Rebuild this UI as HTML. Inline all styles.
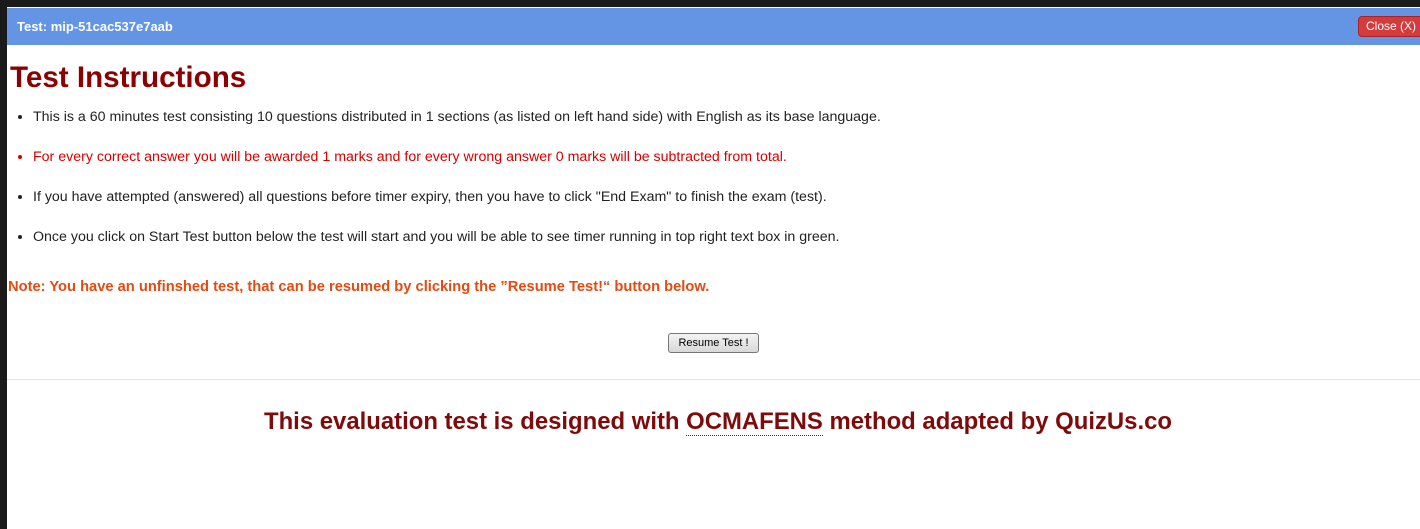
<!DOCTYPE html>
<html><head><style>
html,body{margin:0;padding:0;width:1420px;height:529px;overflow:hidden;background:#1a1a1a;font-family:"Liberation Sans",Arial,sans-serif}
#win{position:absolute;left:7px;top:7px;width:1413px;height:522px;background:#fff}
#bar{position:absolute;left:0;top:1px;width:1413px;height:37px;background:#6495e4}
#bar .t{position:absolute;left:10px;top:11px;color:#fff;font-size:13px;font-weight:bold}
#close{position:absolute;left:1351px;top:8px;width:64px;height:19px;background:#d23c3c;border:1px solid #a82424;border-radius:4px;color:#fff;font-size:12px;line-height:19px;text-align:center}
h1{position:absolute;left:3px;top:54px;margin:0;color:#8b0000;font-size:29.6px;font-weight:bold}
ul{position:absolute;left:0;top:102px;margin:0;padding:0 0 0 26px;font-size:14.2px;color:#222}
li{height:40px;line-height:16px}
li.r{color:#d40000}
.note{position:absolute;left:1px;top:272px;color:#e04c12;font-size:14.7px;font-weight:bold}
.btn{position:absolute;left:661px;top:326px;width:89px;height:18px;border:1px solid #777;border-radius:3px;background:linear-gradient(#f4f4f4,#d8d8d8);font-size:11px;line-height:18px;text-align:center;color:#000}
hr{position:absolute;left:0;top:372px;width:1413px;margin:0;border:0;border-top:1px solid #e5e5e5}
.foot{position:absolute;left:257px;top:401px;color:#7f0a0a;font-size:23.9px;font-weight:bold;white-space:nowrap}
.foot u{text-decoration:none;border-bottom:1px dotted #333}
</style></head><body>
<div id="win">
<div id="bar"><span class="t">Test: mip-51cac537e7aab</span><div id="close">Close (X)</div></div>
<h1>Test Instructions</h1>
<ul>
<li>This is a 60 minutes test consisting 10 questions distributed in 1 sections (as listed on left hand side) with English as its base language.</li>
<li class="r">For every correct answer you will be awarded 1 marks and for every wrong answer 0 marks will be subtracted from total.</li>
<li>If you have attempted (answered) all questions before timer expiry, then you have to click "End Exam" to finish the exam (test).</li>
<li>Once you click on Start Test button below the test will start and you will be able to see timer running in top right text box in green.</li>
</ul>
<div class="note">Note: You have an unfinshed test, that can be resumed by clicking the ”Resume Test!“ button below.</div>
<div class="btn">Resume Test !</div>
<hr>
<div class="foot">This evaluation test is designed with <u>OCMAFENS</u> method adapted by QuizUs.co</div>
</div>
</body></html>
